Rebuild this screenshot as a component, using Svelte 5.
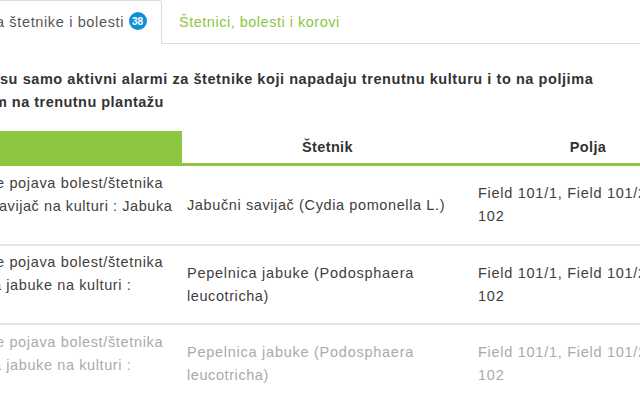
<script lang="ts">
	type Line = { text: string; tracking: number; shift?: number };
	type Alarm = { message: Line[]; pest: Line[]; fields: Line[]; muted?: boolean };

	const fields: Line[] = [
		{ text: 'Field 101/1, Field 101/2,', tracking: 0.72 },
		{ text: '102', tracking: 0.8 }
	];

	const scab: Alarm = {
		message: [
			{ text: 'e pojava bolest/štetnika', tracking: 0.65, shift: -4 },
			{ text: 'a jabuke na kulturi :', tracking: 0.6, shift: -7 }
		],
		pest: [
			{ text: 'Pepelnica jabuke (Podosphaera', tracking: 0.74 },
			{ text: 'leucotricha)', tracking: 0.58 }
		],
		fields
	};

	const alarms: Alarm[] = [
		{
			message: [
				{ text: 'e pojava bolest/štetnika', tracking: 0.65, shift: -4 },
				{ text: 'avijač na kulturi : Jabuka', tracking: 0.56, shift: -1 }
			],
			pest: [{ text: 'Jabučni savijač (Cydia pomonella L.)', tracking: 0.61 }],
			fields
		},
		scab,
		{ ...scab, muted: true }
	];
</script>

{#snippet lines(items: Line[])}
	{#each items as line}
		<div style="letter-spacing: {line.tracking}px; margin-left: {line.shift ?? 0}px">{line.text}</div>
	{/each}
{/snippet}

<main class="page">
	<nav class="tabs">
		<div class="tab active">
			<span class="label">a štetnike i bolesti</span>
			<span class="badge">38</span>
		</div>
		<div class="tab"><span class="link">Štetnici, bolesti i korovi</span></div>
	</nav>

	<div class="notice">
		<div>su samo aktivni alarmi za štetnike koji napadaju trenutnu kulturu i to na poljima</div>
		<div class="second">m na trenutnu plantažu</div>
	</div>

	<div class="table">
		<div class="row head">
			<div class="sorted"></div>
			<div class="title">Štetnik</div>
			<div class="title">Polja</div>
		</div>
		{#each alarms as alarm}
			<div class="row" class:muted={alarm.muted}>
				<div class="message">{@render lines(alarm.message)}</div>
				<div class="middle">{@render lines(alarm.pest)}</div>
				<div class="middle">{@render lines(alarm.fields)}</div>
			</div>
		{/each}
	</div>
</main>

<style>
	:global(body) {
		background: #fff;
		overflow: hidden;
	}
	.page {
		width: 640px;
		height: 400px;
		overflow: hidden;
		color: #404040;
		font: 14.5px/23px 'Liberation Sans', Arial, sans-serif;
		white-space: nowrap;
	}
	.tabs {
		display: flex;
		height: 44px;
	}
	.tab {
		box-sizing: border-box;
		flex: 1;
		height: 44px;
		padding: 11px 0 0 17px;
		border-bottom: 1px solid #dcdcdc;
		letter-spacing: 0.51px;
	}
	.tab.active {
		display: flex;
		flex: none;
		width: 162px;
		padding: 10px 0 0;
		border: 1px solid #dcdcdc;
		border-width: 1px 1px 0 0;
		border-radius: 0 4px 0 0;
		letter-spacing: 0.64px;
	}
	.active .label {
		width: 128px;
		margin-left: -4px;
		color: #555;
	}
	.link {
		color: #8dc63f;
	}
	.badge {
		width: 18px;
		height: 18px;
		margin: 1px 0 0 4.5px;
		border-radius: 50%;
		background: #0d8fd3;
		color: #fff;
		font-size: 10px;
		font-weight: bold;
		line-height: 19px;
		letter-spacing: 0;
		text-align: center;
	}
	.notice {
		height: 63px;
		padding-top: 24px;
		color: #333;
		font-weight: bold;
		letter-spacing: 0.56px;
	}
	.second {
		margin-left: -6px;
		letter-spacing: 0.47px;
	}
	.row {
		box-sizing: border-box;
		display: grid;
		grid-template-columns: 182px 291px 230px;
		height: 79.5px;
		border-bottom: 2px solid #e5e5e5;
	}
	.row.head {
		height: 35px;
		border-bottom: 3px solid #8dc63f;
		color: #333;
	}
	.sorted {
		background: #8dc63f;
	}
	.title {
		font-size: 14.5px;
		font-weight: bold;
		line-height: 33px;
		letter-spacing: 0.35px;
		text-align: center;
	}
	.message {
		padding-top: 5.9px;
	}
	.middle {
		display: flex;
		flex-direction: column;
		justify-content: center;
		padding: 0.6px 5px 0;
	}
	.row.muted {
		border-bottom: 0;
		color: #aaa;
	}
	.muted .middle {
		padding-bottom: 1.5px;
	}
</style>
